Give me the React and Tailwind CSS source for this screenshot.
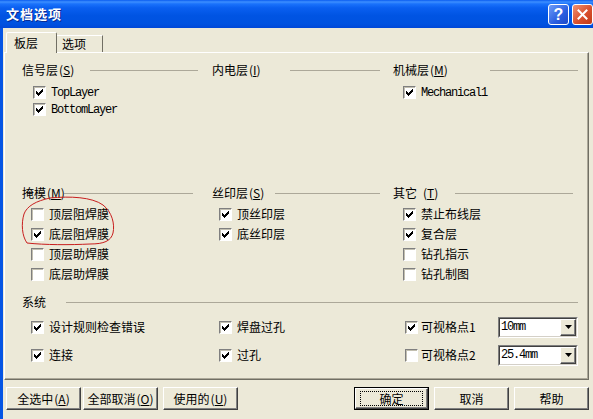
const CJK = "font-['Noto_Sans_CJK_SC','Noto_Sans',sans-serif]";
const MONO = "font-['Liberation_Mono',monospace] text-[12px] tracking-[-1.2px]";

function Mn({ k, space }) {
  return (
    <span className={space ? "ml-[6px]" : "ml-[1px]"}>
      (<span className="underline">{k}</span>)
    </span>
  );
}

function CheckMark() {
  return (
    <svg width="7" height="7" viewBox="0 0 7 7" className="absolute left-[2px] top-[2px]" shapeRendering="crispEdges">
      <path
        d="M6 0h1v1h-1z M5 1h2v1h-2z M0 2h1v1h-1z M4 2h3v1h-3z M0 3h2v1h-2z M3 3h3v1h-3z M0 4h5v1h-5z M1 5h3v1h-3z M2 6h1v1h-1z"
        fill="#000"
      />
    </svg>
  );
}

function Box({ checked }) {
  return (
    <span className="relative block w-[13px] h-[13px] shrink-0 bg-white border border-t-[#7f7f7f] border-l-[#7f7f7f] border-r-white border-b-white shadow-[inset_1px_1px_0_#c2bfb0]">
      {checked && <CheckMark />}
    </span>
  );
}

function Item({ checked, label, mono, pad }) {
  return (
    <div className={`flex items-center h-full ${pad}`}>
      <Box checked={checked} />
      <span className={`ml-[5px] whitespace-nowrap ${mono ? MONO : ""}`}>{label}</span>
    </div>
  );
}

function Header({ children, box, line }) {
  return (
    <div className="flex items-center h-[14px]">
      <div className={`${box} whitespace-nowrap leading-[14px]`}>{children}</div>
      <div className={`${line} h-px bg-[#aca899]`} />
    </div>
  );
}

function Combo({ value }) {
  return (
    <div className="w-[80px] h-[21px] border border-t-[#7f7f7f] border-l-[#7f7f7f] border-r-white border-b-white">
      <div className="flex h-full bg-white border border-t-[#404040] border-l-[#404040] border-r-[#d4d0c8] border-b-[#d4d0c8]">
        <span className={`flex-1 pl-[1px] leading-[17px] ${MONO}`}>{value}</span>
        <span className="w-[16px] h-full flex items-center justify-center bg-[#ece9d8] border border-t-white border-l-white border-r-[#404040] border-b-[#404040] shadow-[inset_-1px_-1px_0_#808080]">
          <svg width="7" height="4" viewBox="0 0 7 4">
            <path d="M0 0H7L3.5 4z" fill="#000" />
          </svg>
        </span>
      </div>
    </div>
  );
}

function Btn({ children, def, gap }) {
  return (
    <div className={`${gap} w-[75px] h-[23px] ${def ? "border border-black" : ""}`}>
      <div className="h-full flex items-center justify-center bg-[#ece9d8] border border-t-white border-l-white border-r-[#404040] border-b-[#404040] shadow-[inset_-1px_-1px_0_#808080]">
        {def ? (
          <span className="flex items-center justify-center w-[63px] h-[15px] border border-dotted border-black">{children}</span>
        ) : (
          children
        )}
      </div>
    </div>
  );
}

export default function App() {
  return (
    <div className={`relative w-[593px] h-[419px] overflow-hidden bg-[#ece9d8] text-[12px] text-black flex flex-col ${CJK}`}>
      {/* title bar */}
      <div className="h-[28px] shrink-0 flex items-center justify-between pl-[6px] bg-[linear-gradient(to_bottom,#0a5cf0_0%,#3d8fff_7%,#1a72fb_14%,#0a5ff0_28%,#0054e3_55%,#0052e0_85%,#0048d8_100%)]">
        <span className="text-white font-bold text-[13px] tracking-[1px] [text-shadow:1px_1px_0_#0a2a8f]">文档选项</span>
        <div className="flex gap-[3px] self-start mt-[4px]">
          <div className="w-[21px] h-[21px] rounded-[3px] border border-white flex items-center justify-center bg-[linear-gradient(135deg,#6d9cf8,#2a5ee0_60%,#1d49c8)] text-white font-bold text-[16px] leading-none font-['Liberation_Sans',sans-serif]">
            ?
          </div>
          <div className="w-[21px] h-[21px] rounded-[3px] border border-white flex items-center justify-center bg-[linear-gradient(135deg,#f09273,#d9502e_55%,#c13a18)]">
            <svg width="11" height="11" viewBox="0 0 11 11">
              <path d="M1.5 1.5L9.5 9.5M9.5 1.5L1.5 9.5" stroke="#fff" strokeWidth="2" strokeLinecap="square" />
            </svg>
          </div>
        </div>
      </div>

      {/* body */}
      <div className="flex-1 flex flex-col border-l-[3px] border-[#0555e4]">
        {/* tabs */}
        <div className="h-[24px] flex items-end ml-[3px]">
          <div className="relative z-10 -mb-px w-[51px] h-[21px] bg-[#ece9d8] border-t border-l border-white border-r border-r-[#716f64] pl-[7px] flex items-center rounded-tl-[2px] rounded-tr-[2px]">
            板层
          </div>
          <div className="w-[46px] h-[17px] border-t border-white border-r border-r-[#716f64] pl-[5px] flex items-center">
            选项
          </div>
        </div>

        {/* panel */}
        <div className="ml-[1px] w-[585px] h-[328px] border border-t-white border-l-white border-r-[#716f64] border-b-[#716f64] shadow-[inset_-1px_-1px_0_#aca899] pl-[17px] flex flex-col">
          {/* section 1 */}
          <div className="flex mt-[10px]">
            <div className="w-[190px]">
              <Header box="w-[68px]" line="w-[108px]">信号层<Mn k="S" /></Header>
            </div>
            <div className="w-[181px]">
              <Header box="w-[78px]" line="w-[90px]">内电层<Mn k="I" /></Header>
            </div>
            <div className="flex-1">
              <Header box="w-[97px]" line="w-[88px]">机械层<Mn k="M" /></Header>
            </div>
          </div>
          <div className="flex mt-[7px] h-[17px]">
            <div className="w-[190px]"><Item checked label="TopLayer" mono pad="pl-[11px]" /></div>
            <div className="w-[181px]" />
            <div className="flex-1"><Item checked label="Mechanical1" mono pad="pl-[10px]" /></div>
          </div>
          <div className="flex h-[17px]">
            <div className="w-[190px]"><Item checked label="BottomLayer" mono pad="pl-[11px]" /></div>
          </div>

          {/* section 2 */}
          <div className="flex mt-[68px]">
            <div className="w-[190px]">
              <Header box="w-[42px]" line="w-[129px]">掩模<Mn k="M" /></Header>
            </div>
            <div className="w-[181px]">
              <Header box="w-[63px]" line="w-[105px]">丝印层<Mn k="S" /></Header>
            </div>
            <div className="flex-1">
              <Header box="w-[62px]" line="w-[118px]">其它<Mn k="T" space /></Header>
            </div>
          </div>
          <div className="flex mt-[4px] h-[20px]">
            <div className="w-[190px]"><Item label="顶层阻焊膜" pad="pl-[9px]" /></div>
            <div className="w-[181px]"><Item checked label="顶丝印层" pad="pl-[7px]" /></div>
            <div className="flex-1"><Item checked label="禁止布线层" pad="pl-[10px]" /></div>
          </div>
          <div className="flex h-[20px]">
            <div className="w-[190px]"><Item checked label="底层阻焊膜" pad="pl-[9px]" /></div>
            <div className="w-[181px]"><Item checked label="底丝印层" pad="pl-[7px]" /></div>
            <div className="flex-1"><Item checked label="复合层" pad="pl-[10px]" /></div>
          </div>
          <div className="flex h-[20px]">
            <div className="w-[190px]"><Item label="顶层助焊膜" pad="pl-[9px]" /></div>
            <div className="w-[181px]" />
            <div className="flex-1"><Item label="钻孔指示" pad="pl-[10px]" /></div>
          </div>
          <div className="flex h-[20px]">
            <div className="w-[190px]"><Item label="底层助焊膜" pad="pl-[9px]" /></div>
            <div className="w-[181px]" />
            <div className="flex-1"><Item label="钻孔制图" pad="pl-[10px]" /></div>
          </div>

          {/* system */}
          <div className="mt-[11px]">
            <Header box="w-[44px]" line="w-[512px]">系统</Header>
          </div>
          <div className="flex mt-[4px] h-[28px] items-center">
            <div className="w-[190px] h-full"><Item checked label="设计规则检查错误" pad="pl-[9px]" /></div>
            <div className="w-[181px] h-full"><Item checked label="焊盘过孔" pad="pl-[7px]" /></div>
            <div className="flex-1 flex items-center pl-[12px]">
              <Box checked />
              <span className="ml-[3px] w-[77px]">可视格点1</span>
              <Combo value="10mm" />
            </div>
          </div>
          <div className="flex h-[28px] items-center">
            <div className="w-[190px] h-full"><Item checked label="连接" pad="pl-[9px]" /></div>
            <div className="w-[181px] h-full"><Item checked label="过孔" pad="pl-[7px]" /></div>
            <div className="flex-1 flex items-center pl-[12px]">
              <Box />
              <span className="ml-[3px] w-[77px]">可视格点2</span>
              <Combo value="25.4mm" />
            </div>
          </div>
        </div>

        {/* buttons */}
        <div className="flex mt-[7px] h-[23px]">
          <Btn gap="ml-[3px]">全选中 <Mn k="A" /></Btn>
          <Btn gap="ml-[2px]">全部取消 <Mn k="O" /></Btn>
          <Btn gap="ml-[5px]">使用的 <Mn k="U" /></Btn>
          <Btn gap="ml-[116px]" def>确定</Btn>
          <Btn gap="ml-[5px]">取消</Btn>
          <Btn gap="ml-[5px]">帮助</Btn>
        </div>
      </div>

      {/* red hand-drawn annotation */}
      <svg className="absolute left-0 top-0 pointer-events-none" width="593" height="419" viewBox="0 0 593 419">
        <path
          d="M50 198 C70 196 92 197 103 205 C112 212 115 224 113 233 C111 241 104 244 90 244 C70 245 45 245 27 243 C22 236 21 224 24 214 C27 206 36 201 50 198"
          fill="none"
          stroke="#c81e1e"
          strokeWidth="1"
        />
      </svg>
    </div>
  );
}
